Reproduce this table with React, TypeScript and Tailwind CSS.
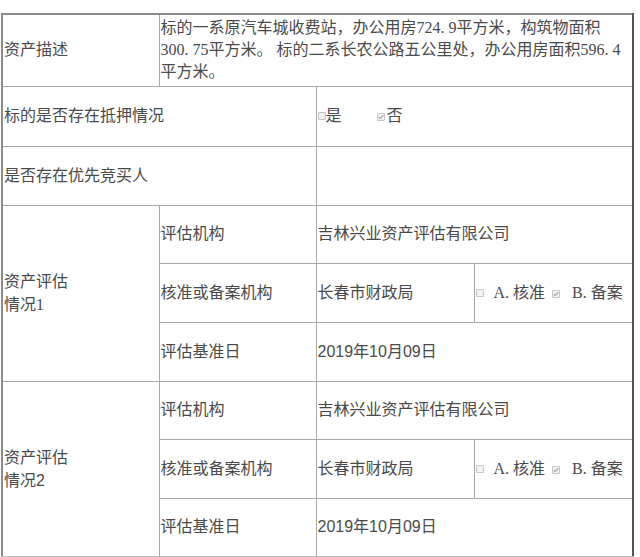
import React from 'react';

const serif = '"Liberation Serif", "Noto Sans CJK SC", serif';
const sans = '"Liberation Sans", "Noto Sans CJK SC", sans-serif';

const Box = ({ checked }: { checked?: boolean }) => (
  <span className="inline-flex items-center justify-center w-[8px] h-[8px] border border-[#c6c6c6] bg-[#f1f1f1] rounded-[1px] align-middle">
    {checked && (
      <svg viewBox="0 0 8 8" className="w-[6px] h-[6px]">
        <path d="M1 4.2 L3 6 L7 1.5" fill="none" stroke="#777" strokeWidth="1.3" />
      </svg>
    )}
  </span>
);

const cell = 'border border-[#a8a8a8] px-px align-middle font-normal';

const EvalGroup = ({ n, numFont }: { n: string; numFont: string }) => (
  <>
    <tr>
      <td rowSpan={3} className={cell}>
        <div className="leading-[23px]">
          资产评估
          <br />
          情况<span style={{ fontFamily: numFont }}>{n}</span>
        </div>
      </td>
      <td className={`${cell} h-[58px]`}>评估机构</td>
      <td colSpan={2} className={cell}>吉林兴业资产评估有限公司</td>
    </tr>
    <tr>
      <td className={`${cell} h-[59px]`}>核准或备案机构</td>
      <td className={cell}>长春市财政局</td>
      <td className={cell}>
        <div className="flex items-center">
          <Box />
          <span className="ml-[10px]">A. 核准</span>
          <span className="ml-[7px]"><Box checked /></span>
          <span className="ml-[12px]">B. 备案</span>
        </div>
      </td>
    </tr>
    <tr>
      <td className={`${cell} h-[59px]`}>评估基准日</td>
      <td colSpan={2} className={cell}>
        <span style={{ fontFamily: sans }}>2019</span>年<span style={{ fontFamily: sans }}>10</span>月<span style={{ fontFamily: sans }}>09</span>日
      </td>
    </tr>
  </>
);

export default function App() {
  return (
    <div className="w-[640px] h-[557px] bg-white overflow-hidden pt-[13px] pl-px">
      <table
        className="w-[631px] table-fixed border-collapse border-t-2 border-l-2 border-r-2 border-b-2 border-t-[#8c8c8c] border-l-[#8c8c8c] border-r-[#555] border-b-[#bdbdbd] text-[16px] text-[#4a4a4a]"
        style={{ fontFamily: serif }}
      >
        <colgroup>
          <col className="w-[157px]" />
          <col className="w-[157px]" />
          <col className="w-[158px]" />
          <col className="w-[159px]" />
        </colgroup>
        <tbody>
          <tr>
            <td className={`${cell} h-[72px]`}>资产描述</td>
            <td colSpan={3} className={`${cell} leading-[22px] py-[2px]`}>
              标的一系原汽车城收费站，办公用房724. 9平方米，构筑物面积
              <br />
              300. 75平方米。 标的二系长农公路五公里处，办公用房面积596. 4
              <br />
              平方米。
            </td>
          </tr>
          <tr>
            <td colSpan={2} className={`${cell} h-[60px]`}>标的是否存在抵押情况</td>
            <td colSpan={2} className={cell}>
              <div className="flex items-center">
                <Box />
                <span>是</span>
                <span className="ml-[35px]"><Box checked /></span>
                <span className="ml-[2px]">否</span>
              </div>
            </td>
          </tr>
          <tr>
            <td colSpan={2} className={`${cell} h-[59px]`}>是否存在优先竞买人</td>
            <td colSpan={2} className={cell}></td>
          </tr>
          <EvalGroup n="1" numFont={serif} />
          <EvalGroup n="2" numFont={sans} />
        </tbody>
      </table>
    </div>
  );
}
